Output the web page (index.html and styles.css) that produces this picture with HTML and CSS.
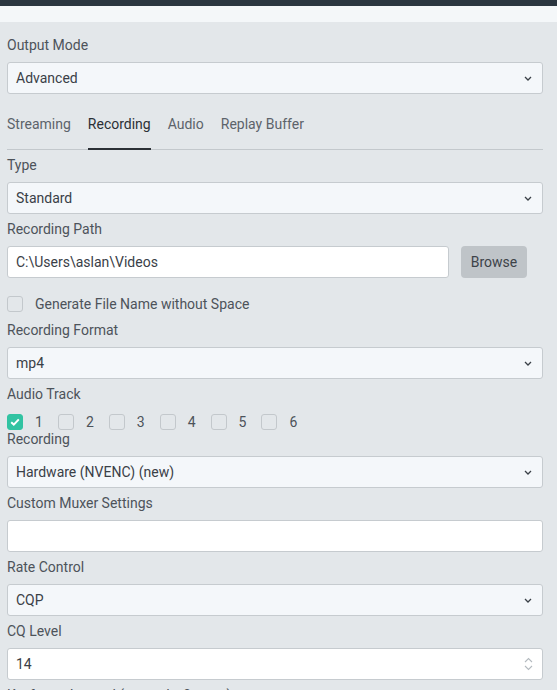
FILE: index.html
```html
<!DOCTYPE html>
<html lang="en">
<head>
  <meta charset="UTF-8">
  <title>Output Settings</title>
  <link rel="stylesheet" href="styles.css">
</head>
<body>
  <div class="topbar"></div>
  <div class="band"></div>

  <div class="content">
    <label class="field-label">Output Mode</label>
    <div class="select">
      <span>Advanced</span>
      <svg class="chevron" width="8" height="5" viewBox="0 0 8 5"><path d="M1 1l3 3 3-3" fill="none" stroke="#3a4047" stroke-width="1.3"/></svg>
    </div>

    <div class="tabs">
      <div class="tab">Streaming</div>
      <div class="tab active">Recording</div>
      <div class="tab">Audio</div>
      <div class="tab">Replay Buffer</div>
    </div>

    <label class="field-label">Type</label>
    <div class="select">
      <span>Standard</span>
      <svg class="chevron" width="8" height="5" viewBox="0 0 8 5"><path d="M1 1l3 3 3-3" fill="none" stroke="#3a4047" stroke-width="1.3"/></svg>
    </div>

    <label class="field-label">Recording Path</label>
    <div class="path-row">
      <div class="input">C:\Users\aslan\Videos</div>
      <button class="browse-btn">Browse</button>
    </div>

    <div class="check-row">
      <span class="checkbox"></span>
      <span>Generate File Name without Space</span>
    </div>

    <label class="field-label">Recording Format</label>
    <div class="select">
      <span>mp4</span>
      <svg class="chevron" width="8" height="5" viewBox="0 0 8 5"><path d="M1 1l3 3 3-3" fill="none" stroke="#3a4047" stroke-width="1.3"/></svg>
    </div>

    <label class="field-label">Audio Track</label>
    <div class="tracks">
      <div class="track">
        <span class="checkbox checked">
          <svg width="10" height="8" viewBox="0 0 10 8"><path d="M1.2 4.2l2.6 2.4 5-5.2" fill="none" stroke="#fff" stroke-width="2"/></svg>
        </span>
        <span>1</span>
      </div>
      <div class="track"><span class="checkbox"></span><span>2</span></div>
      <div class="track"><span class="checkbox"></span><span>3</span></div>
      <div class="track"><span class="checkbox"></span><span>4</span></div>
      <div class="track"><span class="checkbox"></span><span>5</span></div>
      <div class="track"><span class="checkbox"></span><span>6</span></div>
    </div>

    <label class="field-label tight">Recording</label>
    <div class="select">
      <span>Hardware (NVENC) (new)</span>
      <svg class="chevron" width="8" height="5" viewBox="0 0 8 5"><path d="M1 1l3 3 3-3" fill="none" stroke="#3a4047" stroke-width="1.3"/></svg>
    </div>

    <label class="field-label">Custom Muxer Settings</label>
    <div class="input"></div>

    <label class="field-label">Rate Control</label>
    <div class="select">
      <span>CQP</span>
      <svg class="chevron" width="8" height="5" viewBox="0 0 8 5"><path d="M1 1l3 3 3-3" fill="none" stroke="#3a4047" stroke-width="1.3"/></svg>
    </div>

    <label class="field-label">CQ Level</label>
    <div class="input number">
      <span>14</span>
      <svg class="spinner" width="9" height="16" viewBox="0 0 9 16"><path d="M1 6l3.5-3.5L8 6M1 10l3.5 3.5L8 10" fill="none" stroke="#b4babf" stroke-width="1.1"/></svg>
    </div>

    <label class="field-label">Keyframe Interval (seconds, 0=auto)</label>
    <div class="input number"><span>0</span></div>
  </div>
</body>
</html>
```

FILE: styles.css
```css
body {
  margin: 0;
  font-family: Roboto, "Liberation Sans", sans-serif;
  font-size: 14px;
  background: #e3e7ea;
  color: #3a4047;
  overflow: hidden;
}
.topbar {
  height: 6px;
  background: #2b3640;
}
.band {
  height: 16px;
  background: #f4f7f9;
}
.content {
  padding: 8px 14px 0 7px;
}
.field-label {
  display: block;
  margin: 5px 0 7px;
  line-height: 20px;
  color: #4d535a;
}
.field-label.tight {
  margin-top: 0;
}
.select, .input {
  box-sizing: border-box;
  height: 32px;
  display: flex;
  align-items: center;
  justify-content: space-between;
  padding: 0 10px 0 8px;
  border: 1px solid #c6cbcf;
  border-radius: 3px;
  background: #f4f7fa;
  color: #3a4047;
}
.input {
  background: #fff;
}
.tabs {
  display: flex;
  gap: 17px;
  margin-top: 14px;
  border-bottom: 1px solid #c3c8cc;
}
.tab {
  padding: 6px 0 14px;
  line-height: 20px;
  color: #5c636a;
  margin-bottom: -1px;
  border-bottom: 2px solid transparent;
}
.tab.active {
  color: #2b3036;
  border-bottom-color: #2b3036;
  padding-bottom: 13px;
}
.path-row {
  display: flex;
  gap: 12px;
  margin-right: 16px;
}
.path-row .input {
  flex: 1;
}
.browse-btn {
  width: 66px;
  height: 32px;
  border: none;
  border-radius: 4px;
  background: #bfc4c8;
  color: #3d4349;
  font-family: inherit;
  font-size: 14px;
}
.check-row {
  display: flex;
  align-items: center;
  gap: 12px;
  height: 20px;
  margin-top: 16px;
  padding-bottom: 1px;
  color: #4d535a;
}
.checkbox {
  box-sizing: border-box;
  width: 16px;
  height: 16px;
  border: 1px solid #c3c8cc;
  border-radius: 3px;
  display: flex;
  align-items: center;
  justify-content: center;
}
.checkbox.checked {
  background: #31c3a2;
  border-color: #31c3a2;
}
.tracks {
  display: flex;
  align-items: flex-start;
  gap: 15px;
  padding-top: 3px;
  height: 15px;
}
.track {
  display: flex;
  align-items: center;
  gap: 12px;
  height: 16px;
  color: #4d535a;
}
.spinner {
  margin-right: -1px;
}
```
